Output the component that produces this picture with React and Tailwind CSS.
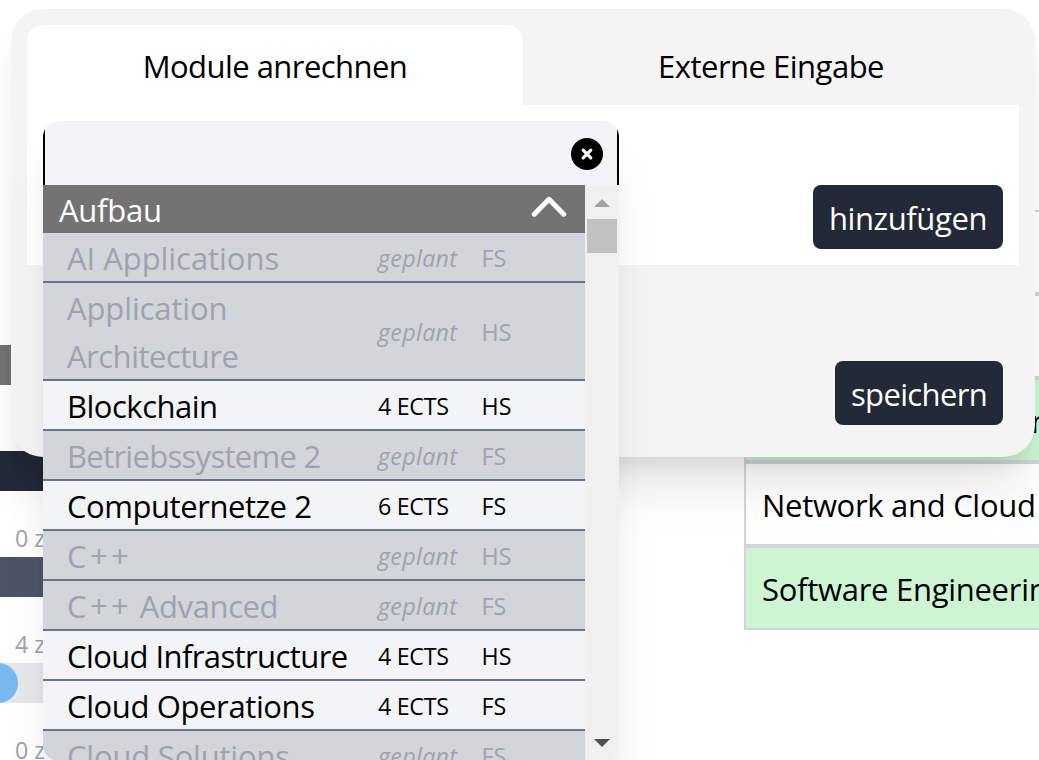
const modules = [
  { name: "AI Applications", spacing: "tracking-[-0.05px]", term: "FS", planned: true },
  { name: "Application Architecture", term: "HS", planned: true, parts: [["Application", "tracking-[-0.12px]"], ["Architecture", "tracking-[-0.5px]"]] },
  { name: "Blockchain", spacing: "tracking-[-0.5px]", term: "HS", ects: 4 },
  { name: "Betriebssysteme 2", spacing: "tracking-[-0.7px]", term: "FS", planned: true },
  { name: "Computernetze 2", spacing: "tracking-[-0.45px]", term: "FS", ects: 6 },
  { name: "C++", spacing: "tracking-[3.4px]", term: "HS", planned: true },
  { name: "C++ Advanced", term: "FS", planned: true, inline: [["C++", "tracking-[3.4px]"], [" Advanced", "tracking-[-0.4px]"]] },
  { name: "Cloud Infrastructure", spacing: "tracking-[-0.6px]", term: "HS", ects: 4 },
  { name: "Cloud Operations", spacing: "tracking-[-0.38px]", term: "FS", ects: 4 },
  { name: "Cloud Solutions", spacing: "tracking-[-0.2px]", term: "FS", planned: true },
];

function ModuleName({ item }) {
  if (item.parts) {
    return item.parts.map(([text, spacing]) => (
      <span key={text} className={`block h-12 ${spacing}`}>{text}</span>
    ));
  }
  if (item.inline) {
    return item.inline.map(([text, spacing]) => (
      <span key={text} className={spacing}>{text}</span>
    ));
  }
  return <span className={item.spacing}>{item.name}</span>;
}

function ModuleRow({ item }) {
  return (
    <li
      className={`flex shrink-0 items-center border-b-2 border-[#69738a] pl-6 ${
        item.parts ? "h-[98px]" : "h-[50px]"
      } ${item.planned ? "bg-[#d2d5da] text-[#9fa3af]" : "bg-[#f3f4f6] text-black"}`}
    >
      <div className={`w-[311px] shrink-0 text-[31px] leading-[50px] whitespace-pre ${item.parts ? "h-24" : "h-12"}`}>
        <ModuleName item={item} />
      </div>
      <div className="h-12 w-[103.5px] shrink-0 text-[23.25px] leading-[50px]">
        {item.planned ? (
          <em className="tracking-[0.3px]">geplant</em>
        ) : (
          <span className="tracking-[-0.3px]">{item.ects} ECTS</span>
        )}
      </div>
      <div className="h-12 text-[23.25px] leading-[50px]">{item.term}</div>
    </li>
  );
}

function Scrollbar() {
  return (
    <div className="flex w-[34px] shrink-0 flex-col items-center bg-[#f0f0f0]">
      <div className="flex h-[34px] shrink-0 items-center pt-[2px]">
        <svg width="16" height="8" viewBox="0 0 16 8" className="block">
          <path d="M8 0 16 8H0Z" fill="#a3a3a3" />
        </svg>
      </div>
      <div className="h-[34px] w-[30px] shrink-0 bg-[#c1c1c1]" />
      <div className="grow" />
      <div className="flex h-[34px] shrink-0 items-start pt-3">
        <svg width="16" height="8" viewBox="0 0 16 8" className="block">
          <path d="M0 0H16L8 8Z" fill="#505050" />
        </svg>
      </div>
    </div>
  );
}

function Dropdown() {
  return (
    <div className="absolute top-[121px] left-[43px] w-[576px] rounded-2xl shadow-[0_40px_50px_-10px_rgba(0,0,0,0.1),0_16px_20px_-12px_rgba(0,0,0,0.1)]">
      <div className="overflow-hidden rounded-t-2xl">
        <div className="flex h-16 items-center justify-end border-x-2 border-black bg-[#f3f4f6] pt-[2px] pr-[14px]">
          <svg width="32" height="32" viewBox="0 0 32 32" className="block">
            <circle cx="16" cy="16" r="16" fill="#000" />
            <path d="M12.2 12.2 19.8 19.8M19.8 12.2 12.2 19.8" stroke="#fff" strokeWidth="3.2" strokeLinecap="round" />
          </svg>
        </div>
      </div>
      <div className="flex h-[576px] overflow-hidden rounded-b-2xl">
        <ul className="flex grow flex-col">
          <li className="flex h-12 shrink-0 justify-between bg-[#737373] pr-[18px] pl-4 text-[31px] leading-[50px] text-white">
            <span className="tracking-[-0.25px]">Aufbau</span>
            <svg width="36" height="24" viewBox="0 0 36 24" fill="none" className="mt-[10px] block">
              <path d="M3.3 19.2 18 4.3 32.7 19.2" stroke="#fff" strokeWidth="5" strokeLinecap="round" strokeLinejoin="round" />
            </svg>
          </li>
          {modules.map((item) => <ModuleRow key={item.name} item={item} />)}
        </ul>
        <Scrollbar />
      </div>
    </div>
  );
}

function Modal() {
  return (
    <div className="absolute top-[9px] left-[11px] flex h-[448px] w-[1024px] flex-col rounded-[32px] bg-[#f4f4f4] p-4 text-[31px] shadow-[0_40px_50px_-10px_rgba(0,0,0,0.1),0_16px_20px_-12px_rgba(0,0,0,0.1)]">
      <div className="flex h-20 shrink-0 text-center leading-[82px]">
        <div className="w-1/2 rounded-t-2xl bg-white tracking-[-0.55px]">Module anrechnen</div>
        <div className="w-1/2 tracking-[-0.5px]">Externe Eingabe</div>
      </div>
      <div className="flex h-40 shrink-0 items-end justify-end bg-white p-4">
        <button className="h-16 w-[190px] rounded-lg bg-[#232936] leading-[66px] tracking-[-0.4px] text-white">hinzufügen</button>
      </div>
      <div className="flex grow items-end justify-end p-4">
        <button className="h-16 w-[168px] rounded-lg bg-[#232936] leading-[66px] tracking-[-0.65px] text-white">speichern</button>
      </div>
    </div>
  );
}

function Progress() {
  return (
    <div className="flex w-[60px] flex-col pt-[345px] text-[23.25px] text-[#9ca3af]">
      <div className="h-10 w-[11px] bg-[#737373]" />
      <div className="mt-[66px] h-10 bg-[#232936]" />
      <div className="h-[66px] pt-[22px] pl-[15px] leading-[50px] whitespace-nowrap">0 z</div>
      <div className="h-10 bg-[#4d5467]" />
      <div className="h-[66px] pt-[22px] pl-[15px] leading-[50px] whitespace-nowrap">4 z</div>
      <div className="flex h-10 bg-[#e5e7eb]">
        <div className="-ml-[30px] w-12 rounded-full bg-[#78b9f2]" />
      </div>
      <div className="h-[56px] pt-[22px] pl-[15px] leading-[50px] whitespace-nowrap">0 z</div>
    </div>
  );
}

function Schedule() {
  const cell = "h-[84px] shrink-0 border-2 border-[#d1d5db] pl-4 whitespace-nowrap";
  return (
    <div className="flex w-[295px] flex-col overflow-hidden pt-[210px] text-[31px] leading-[82px]">
      <div className="flex w-[330px] flex-col">
        <div className={`${cell} bg-white`} />
        <div className={`${cell} bg-white`} />
        <div className={`${cell} flex justify-end bg-[#cdf5d4] pr-[22px]`}>n</div>
        <div className={`${cell} bg-white tracking-[-0.3px]`}>Network and Cloud</div>
        <div className={`${cell} bg-[#cdf5d4] tracking-[-0.28px]`}>Software Engineering</div>
      </div>
    </div>
  );
}

export default function App() {
  return (
    <main className="relative flex h-[760px] w-[1039px] justify-between overflow-hidden bg-white font-['Open_Sans','Noto_Sans',sans-serif] text-black">
      <Progress />
      <Schedule />
      <Modal />
      <Dropdown />
    </main>
  );
}
